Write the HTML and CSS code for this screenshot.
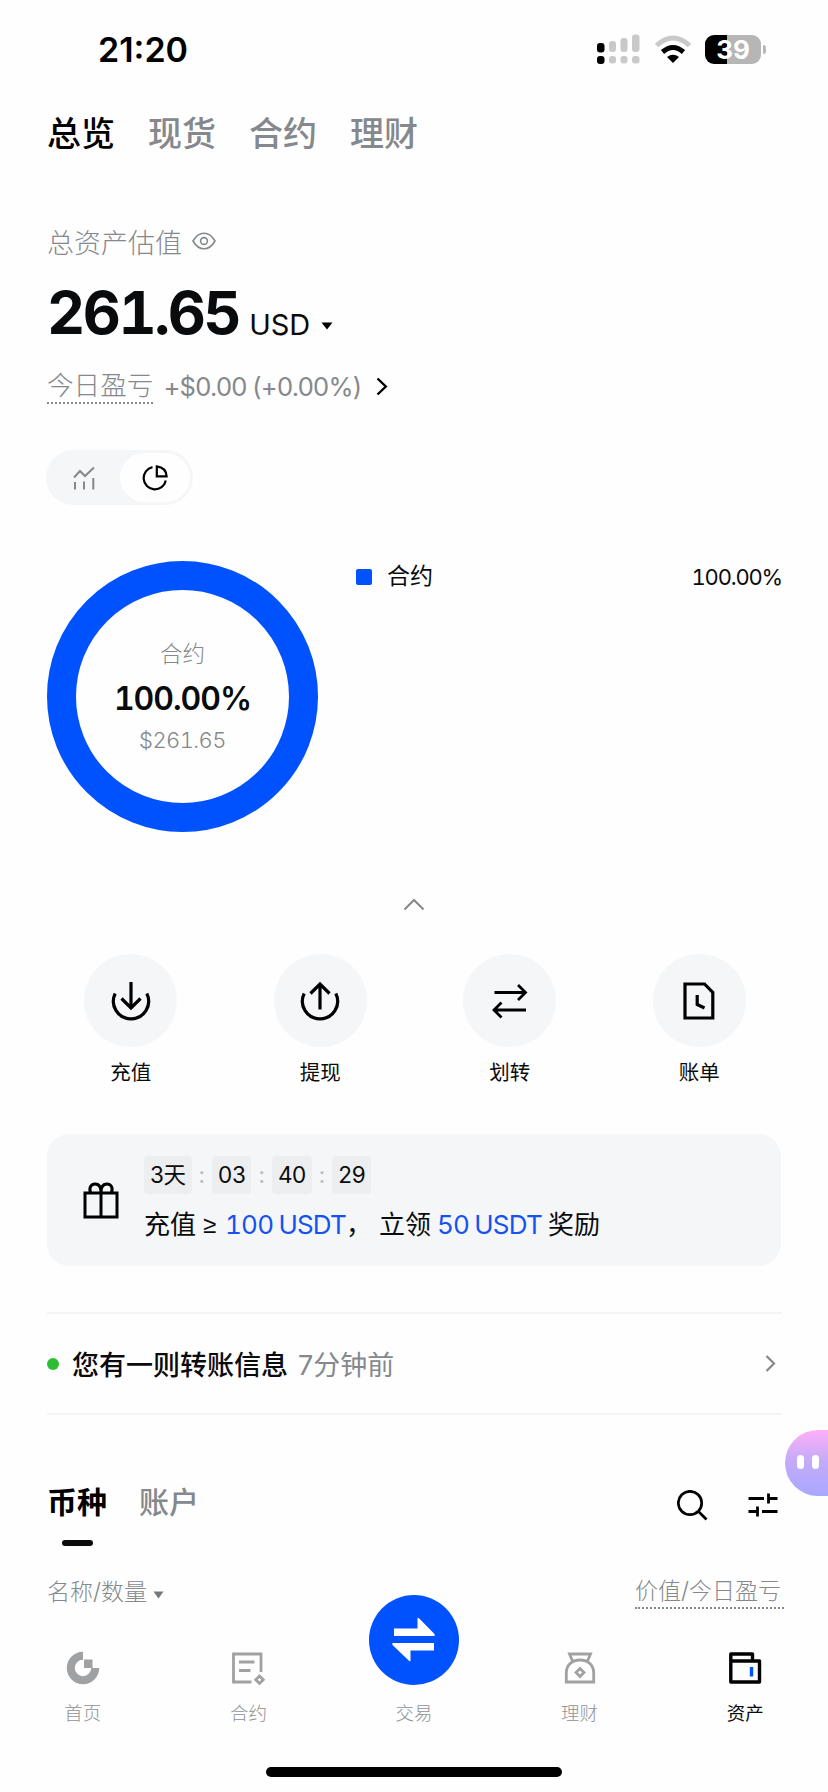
FILE: index.html
```html
<!DOCTYPE html>
<html lang="zh-CN">
<head>
<meta charset="utf-8">
<title>资产总览</title>
<link rel="stylesheet" href="styles.css">
</head>
<body>
<div class="screen">
  <header class="status">
    <span class="clock">21:20</span>
    <div class="status-icons">
      <svg width="44" height="30" viewBox="0 0 44 30">
        <g fill="#c9c9c9"><rect x="12" y="7" width="7" height="11" rx="3"/><rect x="23.500" y="4" width="7" height="14" rx="3"/><rect x="35" y="0.500" width="7.500" height="17.500" rx="3"/><rect x="12" y="22" width="7" height="7.500" rx="3"/><rect x="23.500" y="22" width="7" height="7.500" rx="3"/><rect x="35" y="22" width="7.500" height="7.500" rx="3"/></g>
        <rect x="0" y="9" width="7.500" height="9.500" rx="3"/><rect x="0" y="22" width="7.500" height="8" rx="3"/>
      </svg>
      <svg width="38" height="29" viewBox="0 0 38 29" fill="none">
        <path d="M2.500 10.500Q19 -4.500 35.500 10.500" stroke="#c9c9c9" stroke-width="5"/>
        <path d="M8.500 17Q19 8 29.500 17" stroke="#000" stroke-width="5"/>
        <path d="M13 22Q19 17.500 25 22L19 28Z" fill="#000"/>
      </svg>
      <div class="battery"><span class="battery-level">39</span><i class="battery-nub"></i></div>
    </div>
  </header>

  <nav class="top-tabs"><span class="active">总览</span><span>现货</span><span>合约</span><span>理财</span></nav>

  <div class="label-row"><span>总资产估值</span>
    <svg width="24" height="18" viewBox="0 0 24 18" fill="none" stroke="#85888c" stroke-width="1.600"><path d="M1 9Q5.500 1.200 12 1.200T23 9Q18.500 16.800 12 16.800T1 9Z"/><circle cx="12" cy="9" r="3.400"/></svg>
  </div>
  <div class="amount-row"><span class="amount">261.65</span><span class="currency">USD</span>
    <svg class="caret" width="12" height="8" viewBox="0 0 12 8"><path d="M0.500 0.500H11.500L6 7.500Z"/></svg></div>
  <div class="pnl-row"><span class="dotted">今日盈亏</span><span class="pnl">+$0.00 (+0.00%)</span>
    <svg width="12" height="19" viewBox="0 0 12 19" fill="none" stroke="#000" stroke-width="2.400"><path d="M1.500 1.500L9.800 9.500L1.500 17.500"/></svg></div>

  <div class="toggle">
    <div class="toggle-item"><svg width="22" height="24" viewBox="0 0 22 24" fill="none" stroke="#85888c" stroke-width="2"><path d="M1 11.500L7 5L12 10L21 1.500M2 16V23.500M11 15.500V23.500M20.300 12V23.500"/></svg></div>
    <div class="toggle-item on"><svg width="26" height="26" viewBox="0 0 26 26" fill="none" stroke="#000" stroke-width="2.200"><path d="M10.500 2.200A11.200 11.200 0 1 0 23.800 15.500"/><path d="M14.800 1.400V11.300H24.600Q24 2.500 14.800 1.400Z"/></svg></div>
  </div>

  <section class="chart">
    <div class="donut"><span class="donut-name">合约</span><span class="donut-pct">100.00%</span><span class="donut-val">$261.65</span></div>
    <div class="legend"><i class="swatch"></i><span class="legend-name">合约</span><span class="legend-pct">100.00%</span></div>
  </section>

  <div class="collapse"><svg width="22" height="13" viewBox="0 0 22 13" fill="none" stroke="#85888c" stroke-width="2"><path d="M1.500 11.500L11 2L20.500 11.500"/></svg></div>

  <section class="actions">
    <div class="action"><div class="bubble"><svg width="40" height="40" viewBox="0 0 40 40" fill="none" stroke="#000" stroke-width="3.200"><path d="M4.200 12.500A17.600 17.600 0 1 0 35.800 12.500M20 1V26.500M10.500 17.500L20 27L29.500 17.500"/></svg></div><span>充值</span></div>
    <div class="action"><div class="bubble"><svg width="40" height="40" viewBox="0 0 40 40" fill="none" stroke="#000" stroke-width="3.200"><path d="M4.200 12.500A17.600 17.600 0 1 0 35.800 12.500M20 28.500V3M10.500 12.500L20 3L29.500 12.500"/></svg></div><span>提现</span></div>
    <div class="action"><div class="bubble"><svg width="36" height="36" viewBox="0 0 36 36" fill="none" stroke="#000" stroke-width="2.800"><path d="M2.500 9.500H33M26 2L33.500 9.500L26 17M34 27H3M9.500 19.500L2 27L9.500 34.500"/></svg></div><span>划转</span></div>
    <div class="action"><div class="bubble"><svg width="32" height="38" viewBox="0 0 32 38" fill="none" stroke="#000" stroke-width="3.200"><path d="M2 2H21.500L29.800 10.500V36H2Z"/><path d="M14.200 13V22.500L21.500 26"/></svg></div><span>账单</span></div>
  </section>

  <section class="banner">
    <svg width="36" height="37" viewBox="0 0 36 37" fill="none" stroke="#000" stroke-width="3"><path d="M2 11H34V35H2ZM18 11V35M7.500 11C5.500 5 8.500 2 12 2C16 2 18 5 18 10C18 5 20 2 24 2C27.500 2 30.500 5 28.500 11"/></svg>
    <div class="banner-body">
      <div class="countdown"><b>3天</b><i>:</i><b>03</b><i>:</i><b>40</b><i>:</i><b>29</b></div>
      <div class="offer"><span>充值</span><span class="ge">≥</span><em>100 USDT</em><span class="comma">，</span><span class="claim">立领</span><em class="prize">50 USDT</em><span>奖励</span></div>
    </div>
  </section>

  <section class="notice"><i class="dot"></i><span class="notice-text">您有一则转账信息</span><span class="ago">7分钟前</span>
    <svg width="11" height="17" viewBox="0 0 11 17" fill="none" stroke="#85888c" stroke-width="2.200"><path d="M1.500 1L9 8.500L1.500 16"/></svg></section>

  <section class="asset-head">
    <span class="asset-tab active">币种</span><span class="asset-tab">账户</span>
    <div class="tools">
      <svg width="31" height="31" viewBox="0 0 31 31" fill="none" stroke="#000" stroke-width="2.700"><circle cx="13" cy="13" r="11.700"/><path d="M21.500 21.500L29.500 29.500"/></svg>
      <svg width="30" height="24" viewBox="0 0 30 24" fill="none" stroke="#000" stroke-width="2.800"><path d="M0.500 5.500H16M20.500 0.500V10.500M20.500 5.500H29.500M0.500 18.500H9.500M9.500 13.500V23.500M14 18.500H29.500"/></svg>
    </div>
    <div class="assistant"><i></i><i></i></div>
  </section>
  <section class="columns"><span>名称/数量</span><svg class="sort" width="11" height="8" viewBox="0 0 11 8"><path d="M0.500 0.500H10.500L5.500 7.500Z" fill="#75787b"/></svg><span class="value-col">价值/今日盈亏</span></section>

  <footer class="nav">
    <div class="nav-items">
      <div class="nav-item"><svg width="34" height="34" viewBox="0 0 34 34"><path d="M17 4.800A12.200 12.200 0 1 0 29.200 17" fill="none" stroke="#a0a1a3" stroke-width="8"/><path d="M18 8.500H26.500V17H18Z" fill="#a0a1a3"/></svg><span>首页</span></div>
      <div class="nav-item"><svg width="34" height="34" viewBox="0 0 34 34" fill="none" stroke="#a0a1a3" stroke-width="2.800"><path d="M20.500 31H2.500V3H30V21M8 11H23.500M8 19.500H19.500"/><path d="M28.500 25L32.200 28.700L28.500 32.400L24.800 28.700Z"/></svg><span>合约</span></div>
      <div class="nav-item"><div class="trade"><svg width="46" height="46" viewBox="0 0 46 46" fill="#fff"><path d="M3 11.500H26.500V1.500Q26.500 0 28 1.200L43.500 17Q44.500 19 43 19H3ZM43 33.500H19.500V43.500Q19.500 45 18 43.800L1.500 28Q0.500 26 2 26H43Z"/></svg></div><span>交易</span></div>
      <div class="nav-item"><svg width="34" height="34" viewBox="0 0 34 34" fill="none" stroke="#a0a1a3" stroke-width="2.800"><path d="M9.500 10L6.500 3H27.500L24.500 10M3.300 31V22C3.300 14 9 9 17 9S30.700 14 30.700 22V31Z"/><path d="M17 17.500L21 21.500L17 25.500L13 21.500Z"/></svg><span>理财</span></div>
      <div class="nav-item current"><svg width="34" height="34" viewBox="0 0 34 34" fill="none" stroke="#000" stroke-width="3.400" stroke-linejoin="round"><path d="M2.800 10.500V3H24.500V10M2.800 10H31.500V31H2.800Z"/><path d="M23.500 16V25.500" stroke="#0052ff"/></svg><span>资产</span></div>
    </div>
    <div class="home-bar"></div>
  </footer>
</div>
</body>
</html>
```
FILE: styles.css
```css
* { box-sizing: border-box; }
body { margin: 0; background: #fefefe; }
svg { display: block; flex: none; }
i, em, b { font-style: normal; font-weight: 400; }
.screen {
  display: flex; flex-direction: column; width: 828px; height: 1792px; overflow: hidden;
  background: #fefefe; color: #0a0b0d; white-space: nowrap;
  font-family: Inter, "Noto Sans CJK SC", sans-serif;
}
.screen > * { flex: none; }

.status { display: flex; align-items: center; justify-content: space-between; height: 98px; padding: 0 62px 0 98px; color: #000; }
.clock { font-size: 34px; font-weight: 600; }
.status-icons { display: flex; align-items: center; gap: 13px; }
.battery {
  position: relative; width: 56px; height: 29px; margin-right: 5px; border-radius: 9px;
  background: linear-gradient(90deg, #000 22px, #b6b6b6 22px);
}
.battery-level { display: block; color: #fff; text-align: center; font-size: 26px; font-weight: 700; line-height: 29px; }
.battery-nub { position: absolute; right: -5px; top: 10px; width: 3px; height: 9px; border-radius: 0 3px 3px 0; background: #b6b6b6; }

.top-tabs { display: flex; align-items: center; gap: 33px; height: 70px; padding: 0 0 4px 47px; font-size: 34px; font-weight: 500; color: #85888c; }
.top-tabs .active { color: #000; }

.label-row { display: flex; align-items: center; gap: 10px; height: 40px; margin-top: 53px; padding-left: 47px; font-size: 27px; font-weight: 300; color: #85888c; }
.amount-row { display: flex; align-items: baseline; height: 70px; margin-top: 17px; padding-left: 47px; line-height: 70px; }
.amount { font-size: 59px; font-weight: 700; letter-spacing: -2.400px; font-variant-numeric: tabular-nums; }
.currency { position: relative; top: 1px; margin-left: 10px; font-size: 29px; }
.caret { margin-left: 11px; align-self: center; margin-top: 26px; }
.pnl-row { display: flex; align-items: center; height: 40px; margin-top: 18px; padding-left: 47px; color: #85888c; }
.dotted { font-size: 26.600px; font-weight: 300; line-height: 34px; border-bottom: 2px dotted #85888c; }
.pnl { margin: 0 15px 0 10px; font-size: 25.500px; letter-spacing: -0.700px; word-spacing: -1px; }

.toggle { display: flex; width: 147px; height: 55px; margin: 44px 0 0 46px; padding: 3px; border-radius: 28px; background: #f4f6f8; }
.toggle-item { display: flex; flex: 1; align-items: center; justify-content: center; }
.toggle-item.on { border-radius: 25px; background: #fefefe; }

.chart { display: flex; justify-content: space-between; height: 271px; margin-top: 56px; padding: 0 46px 0 47px; }
.donut { display: flex; flex-direction: column; align-items: center; width: 271px; height: 271px; padding-top: 47px; border: 29px solid #0052ff; border-radius: 50%; }
.donut-name { font-size: 22.500px; font-weight: 300; line-height: 34px; color: #85888c; }
.donut-pct, .donut-val, .legend-pct { font-variant-numeric: tabular-nums; }
.donut-pct { margin-top: 5px; font-size: 32px; font-weight: 600; line-height: 46px; letter-spacing: -1px; }
.donut-val { margin-top: 3px; font-size: 22px; font-weight: 300; line-height: 30px; letter-spacing: -0.600px; color: #85888c; }
.legend { display: flex; align-items: center; width: 426px; height: 32px; font-size: 23px; line-height: 28px; }
.legend-name { margin-bottom: 3px; }
.swatch { width: 16px; height: 16px; margin-right: 15px; border-radius: 2px; background: #0052ff; }
.legend-pct { margin-left: auto; font-size: 22px; letter-spacing: -1.200px; }

.collapse { display: flex; justify-content: center; height: 13px; margin-top: 66px; }

.actions { display: flex; height: 135px; margin-top: 43px; padding: 0 34px 0 36px; }
.action { display: flex; flex: 1; flex-direction: column; align-items: center; font-size: 20.500px; line-height: 30px; }
.bubble { display: flex; align-items: center; justify-content: center; width: 93px; height: 93px; margin-bottom: 11px; border-radius: 50%; background: #f4f6f8; }

.banner { display: flex; align-items: center; height: 132px; margin: 45px 47px 0; padding-left: 36px; border-radius: 22px; background: #f4f6f8; }
.banner-body { margin-left: 25px; }
.countdown { display: flex; align-items: center; font-size: 22.500px; }
.countdown b { height: 38px; padding: 0 6px; border-radius: 4px; line-height: 38px; letter-spacing: -0.400px; background: #edeeef; }
.countdown i { width: 20.500px; text-align: center; color: #b9bbbe; }
.offer { display: flex; margin-top: 11px; font-size: 26px; line-height: 40px; }
.offer em { color: #1652f0; letter-spacing: -0.800px; word-spacing: -1px; font-variant-numeric: tabular-nums; }
.ge { width: 14px; margin: 0 8px 0 7px; font-family: "Liberation Sans", sans-serif; font-size: 24px; }
.comma { width: 26px; }
.claim { margin-left: 7px; }
.prize { margin: 0 6px; }

.notice { display: flex; align-items: center; height: 103px; margin: 46px 46px 0 47px; border: solid #f4f4f5; border-width: 2px 0; }
.dot { width: 12px; height: 12px; margin-right: 13px; border-radius: 50%; background: #2dbd35; }
.notice-text { font-size: 27px; font-weight: 500; }
.ago { margin-left: 10px; font-size: 27px; color: #85888c; }
.notice svg { margin: 0 6px 0 auto; }

.asset-head { display: flex; position: relative; height: 67px; margin-top: 65px; padding: 0 50px 0 47px; }
.asset-tab { font-size: 30px; font-weight: 500; line-height: 44px; margin-right: 32px; color: #85888c; }
.asset-tab.active { color: #000; font-weight: 600; }
.asset-tab.active::after { content: ""; display: block; width: 31px; height: 6px; margin: 16px auto 0; border-radius: 3px; background: #0a0b0d; }
.tools { display: flex; align-items: center; gap: 40px; height: 50px; margin-left: auto; }
.assistant {
  position: absolute; left: 785px; top: -50px; display: flex; gap: 8px; width: 80px; height: 66px; padding: 25px 0 0 12px;
  border-radius: 33px; background: linear-gradient(#ffaff8, #c5abf8 45%, #a9a7ff);
}
.assistant i { width: 7px; height: 14px; border-radius: 4px; background: #fff; }

.columns { display: flex; align-items: flex-start; height: 36px; margin-top: 28px; padding: 0 44px 0 47px; font-size: 23px; font-weight: 300; line-height: 34px; color: #85888c; }
.sort { margin: 16px 0 0 6px; }
.value-col { margin-left: auto; padding-right: 3px; line-height: 32px; border-bottom: 2px dotted #85888c; }

.nav { display: flex; flex-direction: column; justify-content: space-between; align-items: center; height: 160px; margin-top: 19px; padding-bottom: 13px; }
.nav-items { display: flex; width: 828px; padding-top: 21px; }
.nav-item { display: flex; flex: 1; flex-direction: column; align-items: center; gap: 14px; height: 80px; font-size: 18.500px; line-height: 28px; font-weight: 300; color: #909295; }
.nav-item.current { color: #0a0b0d; font-weight: 400; }
.trade { display: flex; align-items: center; justify-content: center; width: 90px; height: 90px; margin-top: -56px; border-radius: 50%; background: #0052ff; }
.home-bar { width: 296px; height: 10px; border-radius: 5px; background: #000; }
```
